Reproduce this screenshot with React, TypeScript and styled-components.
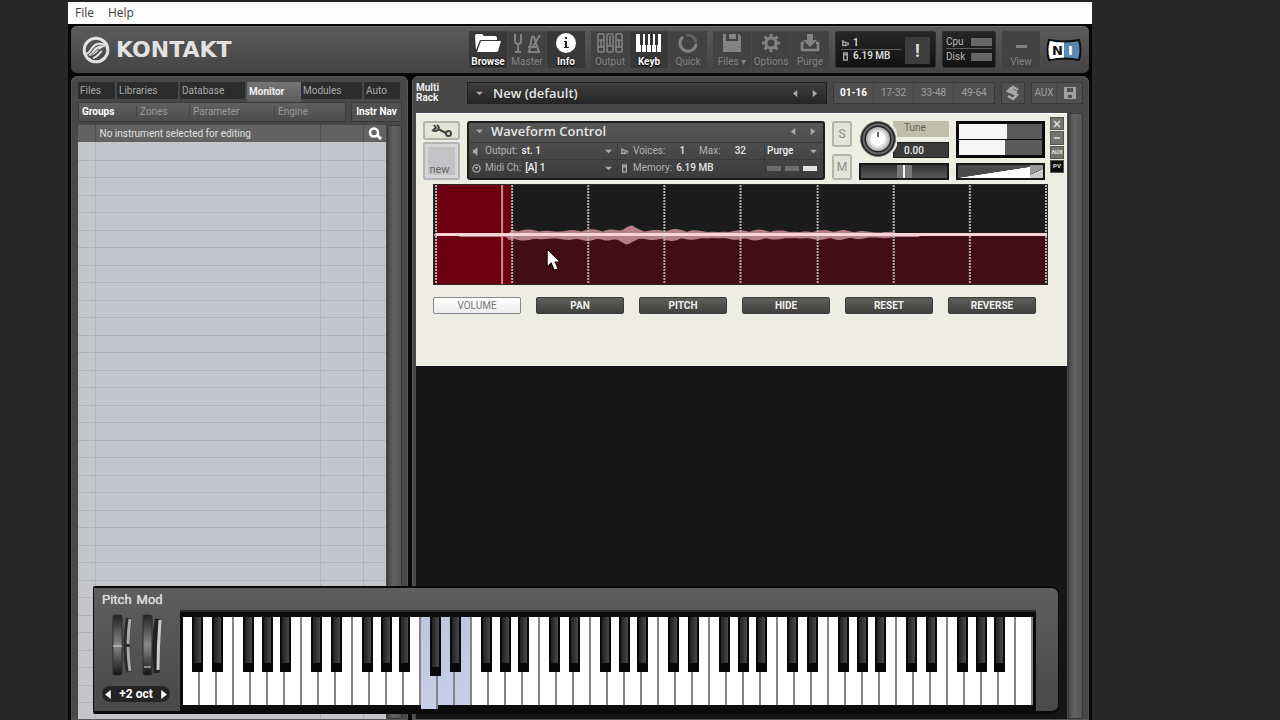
import React from "react";
import styled, { createGlobalStyle, css } from "styled-components";

const ui = `Roboto, "Liberation Sans", sans-serif`;
const human = `"Open Sans", "Noto Sans", sans-serif`;

const Global = createGlobalStyle`
  * { box-sizing: border-box; }
  body { margin: 0; background: #272727; font-family: ${ui}; font-size: 10px; line-height: 12px; color: #b8b8b8; }
  button, select, input { font: inherit; color: inherit; margin: 0; padding: 0; border: 0; background: none; border-radius: 0; }
  button { display: block; cursor: pointer; white-space: nowrap; }
  svg { display: block; }
`;

const Desktop = styled.div`
  height: 100vh;
  overflow: hidden;
  padding: 0 188px 0 68px;
  background: radial-gradient(#292929 25%, transparent 26%) 0 0 / 4px 4px, #262626;
`;
const Window = styled.main`
  position: relative;
  display: flex;
  flex-direction: column;
  height: 100%;
  background: #070707;
  border-top: 2px solid #202020;
`;
const MenuBar = styled.nav`
  display: flex;
  flex: none;
  gap: 14px;
  height: 22px;
  padding: 0 7px;
  background: #fdfdfd;
  color: #3c3c3c;
  font: 12px/20px ${human};
`;
const Frame = styled.div`
  display: flex;
  flex: 1;
  flex-direction: column;
  gap: 3px;
  min-height: 0;
  padding: 2px 3px 0;
`;
const Header = styled.header`
  display: flex;
  flex: none;
  align-items: center;
  gap: 6px;
  height: 47px;
  padding: 0 7px 0 11px;
  border-radius: 6px;
  background: linear-gradient(#5b5b5b, #444);
  box-shadow: inset 0 1px #707070;
`;
const Brand = styled.h1`
  display: flex;
  align-items: center;
  gap: 6px;
  flex: 1;
  margin: 0;
  color: #e2e2e2;
  font: bold 22px/28px "DejaVu Sans", sans-serif;
`;
const ToolGroup = styled.div`
  display: flex;
  gap: 1px;
  background: #4a4a4a;
`;
const Tool = styled.button<{ $on?: boolean }>`
  display: flex;
  flex-direction: column;
  align-items: center;
  justify-content: space-between;
  width: 38px;
  height: 37px;
  padding: 2px 0 0;
  background: ${p => (p.$on ? "#383838" : "#424242")};
  color: ${p => (p.$on ? "#fff" : "#828282")};
  font-weight: ${p => (p.$on ? 700 : 400)};
  ${p => p.$on && css`text-shadow: 0 0 2px #000, 0 1px 1px #000;`}
`;
const Dark = styled.section`
  display: flex;
  height: 37px;
  gap: 4px;
  padding: 5px;
  border-radius: 2px;
  background: linear-gradient(#262626, #121212);
  border: 1px solid #2e2e2e;
`;
const Status = styled(Dark)`width: 101px;`;
const Load = styled(Dark)`width: 54px; padding: 3px;`;
const Lines = styled.div`
  flex: 1;
  display: flex;
  flex-direction: column;
  justify-content: space-between;
`;
const Line = styled.div<{ $rule?: boolean }>`
  display: flex;
  align-items: center;
  gap: 3px;
  height: 14px;
  white-space: nowrap;
  ${p => p.$rule && css`border-bottom: 1px solid #5c5c5c;`}
`;
const Val = styled.b<{ $wide?: boolean }>`
  margin: 0 ${p => (p.$wide ? 10 : 0)}px;
  color: #e4e4e4;
  font-weight: 500;
`;
const Bar = styled.i`
  width: 21px;
  height: 8px;
  margin-left: auto;
  background: #686868;
`;
const Alert = styled.button`
  width: 25px;
  height: 27px;
  background: #3d3d3d;
  color: #ddd;
  font-size: 18px;
  font-weight: 700;
`;
const Work = styled.div`
  display: flex;
  flex: 1;
  gap: 4px;
  min-height: 0;
`;
const Browser = styled.aside`
  display: flex;
  flex: none;
  flex-direction: column;
  width: 337px;
  padding: 5px 5px 0 6px;
  border-radius: 6px 6px 0 0;
  background: #484848;
  border: 1px solid #565656;
`;
const Tabs = styled.div`
  display: grid;
  flex: none;
  grid-template-columns: 39px 63px 67px 54px 63px 1fr;
  height: 20px;
`;
const Tab = styled.button<{ $on?: boolean }>`
  height: ${p => (p.$on ? 20 : 17)}px;
  padding: 0 2px;
  border-right: ${p => (p.$on ? 0 : 2)}px solid #484848;
  background: ${p => (p.$on ? "linear-gradient(#747474, #5c5c5c)" : "#2c2c2c")};
  color: ${p => (p.$on ? "#f2f2f2" : "#a8a8a8")};
  font-weight: ${p => (p.$on ? 700 : 400)};
  text-align: left;
`;
const SubRow = styled.div`
  display: flex;
  flex: none;
  gap: 5px;
  height: 20px;
  margin-bottom: 3px;
`;
const SubTabs = styled.div`
  display: grid;
  flex: 1;
  grid-template-columns: 58px 53px 85px 1fr;
  padding: 3px 0;
  background: linear-gradient(#606060, #4c4c4c);
  border: 1px solid #3a3a3a;
`;
const Sub = styled.button<{ $on?: boolean }>`
  padding: 0 3px;
  border-right: 1px solid #444;
  color: ${p => (p.$on ? "#fff" : "#999")};
  font-weight: ${p => (p.$on ? 700 : 400)};
  text-align: left;
  &:last-child { border: 0; }
`;
const Nav = styled.button`
  width: 51px;
  border: 1px solid #3a3a3a;
  background: #505050;
  color: #fff;
  font-weight: 700;
`;
const ListArea = styled.div`
  display: flex;
  flex: 1;
  min-height: 0;
  gap: 1px;
  overflow: hidden;
`;
const List = styled.table`
  flex: 1;
  align-self: flex-start;
  table-layout: fixed;
  border-collapse: collapse;
  background: #c4c5ca;
  th {
    height: 17px;
    padding: 0 4px;
    border-right: 1px solid #505050;
    background: #626262;
    color: #e0e0e0;
    font-weight: 400;
    text-align: left;
    white-space: nowrap;
  }
  th:last-child, td:last-child { border-right: 0; }
  td {
    padding: 0;
    border: solid #b2b3b8;
    border-width: 0 1px 1px 0;
  }
  tr:nth-child(odd) td { height: 18px; }
  tr:nth-child(even) td { height: 17px; }
`;
const Scroll = styled.div`
  flex: none;
  width: 15px;
  background: linear-gradient(90deg, #484848, #626260 40%, #555);
  border: 1px solid #3a3a3a;
`;
const Rack = styled.section`
  display: flex;
  flex: 1;
  flex-direction: column;
  min-width: 0;
  padding: 0 5px 0 3px;
  border-radius: 6px 6px 0 0;
  background: #484848;
  border: 1px solid #565656;
`;
const RackBar = styled.div`
  display: flex;
  flex: none;
  align-items: center;
  gap: 6px;
  height: 36px;
  padding-bottom: 4px;
`;
const RackTitle = styled.h2`
  width: 45px;
  margin: 0;
  color: #eee;
  font: bold 10px/10px ${ui};
`;
const Field = styled.div`
  display: flex;
  flex: 1;
  align-items: center;
  gap: 10px;
  height: 22px;
  padding: 0 8px;
  border: 1px solid #222;
  background: linear-gradient(#3d3d3d, #262626);
  color: #b5b5b5;
`;
const Title = styled.select`
  flex: 1;
  appearance: none;
  color: #e4e4e4;
  font: 600 13px/18px ${human};
`;
const Arrows = styled.div`
  display: flex;
  gap: 12px;
`;
const Pages = styled.div`
  display: flex;
  height: 22px;
  border: 1px solid #3a3a3a;
  background: #505050;
`;
const Page = styled.button<{ $on?: boolean; $w?: number }>`
  display: flex;
  align-items: center;
  justify-content: center;
  width: ${p => p.$w ?? 40}px;
  border-right: 1px solid #464646;
  color: ${p => (p.$on ? "#fff" : "#a0a0a0")};
  font-weight: ${p => (p.$on ? 700 : 400)};
  &:last-child { border: 0; }
`;
const RackBody = styled.div`
  display: flex;
  flex: 1;
  gap: 1px;
  min-height: 0;
`;
const Slots = styled.div`
  flex: 1;
  min-width: 0;
  background: #161616;
`;
const Instrument = styled.article`
  padding: 7px 3px 0 7px;
  height: 253px;
  background: #edeee1;
  border-top: 1px solid #fff;
`;
const Head = styled.div`
  display: flex;
  gap: 7px;
  height: 59px;
`;
const Col = styled.div<{ $w?: number }>`
  display: flex;
  flex: none;
  flex-direction: column;
  justify-content: space-between;
  width: ${p => p.$w}px;
`;
const LightBtn = styled.button<{ $h: number }>`
  display: flex;
  align-items: center;
  justify-content: center;
  width: 100%;
  height: ${p => p.$h}px;
  border: 2px solid #b4b5aa;
  border-radius: 3px;
  background: #e3e4d8;
  color: #8c8c84;
  font-size: 12px;
`;
const Thumb = styled.button`
  display: flex;
  align-items: flex-end;
  justify-content: center;
  width: 100%;
  height: 38px;
  padding: 0 4px 2px 0;
  border: 2px solid #b5b5b5;
  border-radius: 2px;
  background: #d5d5d6;
  box-shadow: inset 0 0 0 3px #d5d5d6, inset 0 0 0 20px #c3c3c5;
  color: #666;
  font-size: 11px;
`;
const Info = styled.div`
  flex: 1;
  min-width: 0;
  padding: 1px;
  border: 2px solid #1c1c1c;
  border-radius: 3px;
  background: linear-gradient(#575757, #3b3b3b);
  color: #b0b0b0;
`;
const InfoTop = styled.div`
  display: flex;
  align-items: center;
  gap: 8px;
  height: 18px;
  padding: 0 6px 4px 6px;
`;
const InfoGrid = styled.div`
  display: grid;
  grid-template-columns: 148px 1fr 57px;
`;
const Cell = styled.div`
  display: flex;
  align-items: center;
  gap: 4px;
  height: 17px;
  padding: 0 5px 0 2px;
  border: solid #3a3a3a;
  border-width: 1px 1px 0 0;
  white-space: nowrap;
  &:nth-child(3n) { border-right: 0; }
`;
const Pick = styled.select`
  flex: 1;
  min-width: 0;
  appearance: none;
  color: #eee;
  font-weight: 500;
`;
const Leds = styled.div`
  display: flex;
  gap: 4px;
  i { width: 14px; height: 5px; background: #6c6c6c; }
  i:last-child { background: #e4e4e8; }
`;
const TuneRow = styled.div`
  display: flex;
  height: 37px;
`;
const Knob = styled.svg`
  position: relative;
  z-index: 1;
  flex: none;
`;
const TuneText = styled.div`
  display: flex;
  flex: 1;
  flex-direction: column;
  justify-content: space-between;
  min-width: 0;
  margin-left: -4px;
  label { height: 16px; padding: 0 0 0 11px; background: #c0bfac; color: #5e5e54; line-height: 14px; }
  input { width: 100%; height: 16px; padding: 0 0 0 10px; background: #3a3a3a; border: 1px solid #1e1e1e; color: #eee; font-weight: 500; }
`;
const Slider = styled.input<{ $ramp?: boolean }>`
  appearance: none;
  display: block;
  width: 100%;
  height: 17px;
  border: 2px solid #161616;
  background: ${p => (p.$ramp
    ? "linear-gradient(to bottom right, #4a4a4a 49%, #fff 51%)"
    : "linear-gradient(#333, #585858)")};
  &::-webkit-slider-thumb {
    appearance: none;
    width: ${p => (p.$ramp ? 13 : 15)}px;
    height: 13px;
    background: ${p => (p.$ramp
      ? "linear-gradient(155deg, #999 48%, #444 50%, #ccc 54%)"
      : "linear-gradient(90deg, #777 6px, #f4f4f4 6px, #f4f4f4 8px, #777 8px)")};
  }
`;
const Meter = styled.div`
  display: flex;
  flex-direction: column;
  gap: 1px;
  height: 37px;
  padding: 2px;
  border: 1px solid #050505;
  background: #0c0c0c;
`;
const Level = styled.div<{ $v: number }>`
  flex: 1;
  background: linear-gradient(90deg, #f6f6f6 ${p => p.$v}%, #5a5a5a ${p => p.$v}%);
`;
const Minis = styled.div`
  display: flex;
  flex: none;
  flex-direction: column;
  gap: 1px;
  width: 14px;
  height: 56px;
  margin: -4px 0 0 -2px;
`;
const Mini = styled.button<{ $on?: boolean }>`
  flex: 1;
  border: 1px solid #55554f;
  background: ${p => (p.$on ? "#0c0c0c" : "#74746e")};
  color: #e2e2da;
  font: bold 6px/8px ${ui};
  svg { margin: 0 auto; }
`;
const Script = styled.div`
  padding: 4px 16px 0 10px;
`;
const Wave = styled.svg`
  width: 100%;
  height: 101px;
  border: 1px solid #2a2a26;
`;
const Modes = styled.div`
  display: grid;
  grid-template-columns: repeat(6, minmax(60px, 88px));
  gap: 15px;
  margin-top: 12px;
`;
const Mode = styled.button<{ $on?: boolean }>`
  height: 17px;
  border: 1px solid ${p => (p.$on ? "#888" : "#3c3c3a")};
  border-radius: 2px;
  background: ${p => (p.$on ? "linear-gradient(#fff, #ececec)" : "linear-gradient(#5e5e5a, #40403e)")};
  color: ${p => (p.$on ? "#777" : "#f0f0f0")};
  font-weight: ${p => (p.$on ? 400 : 700)};
`;
const Piano = styled.section`
  position: absolute;
  right: 33px;
  bottom: 6px;
  left: 25px;
  display: flex;
  height: 128px;
  border: solid #0a0a0a;
  border-width: 2px 1px 3px;
  border-radius: 2px 8px 8px 2px;
  background: linear-gradient(#5e5e5e, #494949);
  padding: 0 22px 0 0;
`;
const Wheels = styled.div`
  display: flex;
  flex: none;
  flex-direction: column;
  width: 86px;
  padding: 4px 0 0 8px;
  color: #dcdcdc;
  font: 13px/16px ${ui};
`;
const WheelNames = styled.div`
  display: flex;
  gap: 5px;
  height: 22px;
  text-shadow: 0 0 1px #ddd;
`;
const Octave = styled.div`
  display: flex;
  align-items: center;
  justify-content: space-between;
  width: 68px;
  height: 16px;
  margin-top: 10px;
  padding: 0 2px;
  border-radius: 8px;
  background: #242424;
  color: #fff;
  font-size: 12px;
  font-weight: 700;
`;
const Keys = styled.div`
  display: flex;
  flex: 1;
  margin-top: 22px;
  padding: 5px 3px 6px;
  background: #0b0b0b;
  border-top: 2px solid #2a2a2a;
`;
const WhiteKey = styled.div<{ $held?: boolean; $down?: boolean }>`
  position: relative;
  flex: 1;
  margin-bottom: ${p => (p.$down ? -4 : 0)}px;
  border-right: 2px solid #858585;
  background: ${p => (p.$held ? "linear-gradient(#bcc6e2, #c9cfe6)" : "#fff")};
`;
const BlackKey = styled.button<{ $shift: number; $down?: boolean }>`
  position: absolute;
  z-index: 1;
  top: 0;
  right: ${p => -7 - p.$shift}px;
  width: 11px;
  height: ${p => (p.$down ? 59 : 55)}px;
  border: solid #080808;
  border-width: 0 2px 9px;
  background: linear-gradient(90deg, #222, #484848);
`;

const Tri = ({ dir = "down", size = 7, color = "#aaa" }: { dir?: "down" | "left" | "right"; size?: number; color?: string }) => (
  <svg width={size} height={size} viewBox="0 0 8 8" fill={color} aria-hidden>
    <path d={dir === "down" ? "M0 2h8L4 6z" : dir === "left" ? "M6 0v8L1 4z" : "M2 0v8l5-4z"} />
  </svg>
);

const icons: Record<string, React.ReactNode> = {
  Browse: <path fill="currentColor" d="M1 3q0-2 2-2h5l2 2h11q2 0 2 2v2H6L2 17zM7 8h20l-3 10q0 1-2 1H3z" />,
  Master: (
    <g fill="none" stroke="currentColor" strokeWidth="2">
      <path d="M2 1v7q0 3 3 3t3-3V1M5 11v8M2 19h6M16 19l3-15h2l5 15zM15 14h10M19 15l8-13" />
    </g>
  ),
  Info: (
    <g>
      <circle cx="14" cy="10" r="10" fill="currentColor" />
      <path d="M12 8h3v6h2v1h-5v-1h1V9h-1zM13 4h2v2h-2z" fill="#222" />
    </g>
  ),
  Output: (
    <g fill="none" stroke="currentColor" strokeWidth="1.6">
      <rect x="2" y="1" width="6" height="18" rx="1" /><path d="M2 7h6M5 7v7M2 14h6" />
      <rect x="11" y="1" width="6" height="18" rx="1" /><path d="M11 13h6M14 3v10" />
      <rect x="20" y="1" width="6" height="18" rx="1" /><path d="M20 7h6M23 7v7M20 14h6" />
    </g>
  ),
  Keyb: (
    <g>
      <path d="M1 1h25v18H1z" fill="currentColor" />
      <path d="M5 1h3v11H5zM10 1h3v11h-3zM15 1h3v11h-3zM20 1h3v11h-3z" fill="#333" />
      <path d="M6.500 12v7M11.500 12v7M16.500 12v7M21.500 12v7" stroke="#333" />
    </g>
  ),
  Quick: (
    <g fill="none" stroke="currentColor" strokeWidth="3">
      <path d="M9 4a8 8 0 1 0 13 7" /><path d="M12 2.500a8 8 0 0 1 10 8" opacity=".5" />
    </g>
  ),
  Files: <path fill="currentColor" fillRule="evenodd" d="M5 1h3v7h12V1h1l2 2v16H5zM11 1h7v5h-7z" />,
  Options: (
    <g stroke="currentColor" fill="none">
      <circle cx="14" cy="10" r="5" strokeWidth="3" />
      <path strokeWidth="3" d="M14 1v4M14 15v4M5 10h4M19 10h4M7.600 3.600l3 3M17.400 13.400l3 3M20.400 3.600l-3 3M10.600 13.400l-3 3" />
    </g>
  ),
  Purge: (
    <g>
      <path fill="currentColor" d="M11 1h6v6h4l-7 7-7-7h4z" />
      <path d="M8 10H6v7h16v-7h-2" fill="none" stroke="currentColor" strokeWidth="2.500" />
    </g>
  ),
  View: <path d="M9 12h11v3H9z" fill="currentColor" />,
};

const ToolButton = ({ name, on }: { name: string; on?: boolean }) => (
  <Tool $on={on}>
    <svg width="28" height="21" viewBox="0 0 28 21" aria-hidden>{icons[name]}</svg>
    <span>{name}{name === "Files" && " ▾"}</span>
  </Tool>
);

const NoteIcon = () => (
  <svg width="9" height="9" viewBox="0 0 10 10" fill="none" stroke="#aaa" strokeWidth="1.500" aria-hidden>
    <path d="M2 1v7M2 3l6 2M5 3v5M8 4v3M2 7h5" />
  </svg>
);
const MemIcon = () => (
  <svg width="9" height="9" viewBox="0 0 10 10" fill="none" stroke="#aaa" strokeWidth="1.500" aria-hidden>
    <path d="M3 1h4v8H3zM3 3h4" />
  </svg>
);

const envelope = (x: number) => {
  if (x < 78 || x > 460) return x > 30 && x < 490 ? 1 : 0;
  const peak = Math.max(0, 6 - Math.abs(x - 197) / 2);
  const bumps = Math.abs(Math.sin(x / 9) + Math.sin(x / 5.3)) * 1.2;
  const base = x < 250 ? 2.500 : x < 400 ? 2 : 1.500;
  return base + bumps + peak;
};
const wavePath = (() => {
  const xs = Array.from({ length: 205 }, (_, i) => i * 3);
  const top = xs.map(x => `L${x} ${(49 - envelope(x)).toFixed(1)}`).join("");
  const bottom = xs.map(x => `L${x} ${(51 + envelope(x + 4)).toFixed(1)}`).reverse().join("");
  return `M0 50${top}${bottom}Z`;
})();

const shifts: Record<number, number> = { 0: -2, 1: 1, 3: -2, 4: 0, 5: 1 };

export default function App() {
  return (
    <Desktop>
      <Global />
      <Window>
        <MenuBar>
          <button>File</button>
          <button>Help</button>
        </MenuBar>
        <Frame>
          <Header>
            <Brand>
              <svg width="28" height="28" viewBox="0 0 28 28" fill="none" stroke="#e2e2e2" aria-hidden>
                <circle cx="14" cy="14" r="11.800" strokeWidth="3" />
                <path d="M4 18c5-1 5-8 11-10 4-1 6 0 8 1" strokeWidth="2" />
                <path d="M6 19c4-1 5-7 10-9 3-1 6 0 9 0-5 1-7 3-9 5-3 3-6 6-10 4z" fill="#e2e2e2" stroke="none" />
                <path d="M11 22c4 0 6-5 9-7" strokeWidth="2" />
                <path d="M9 19c3-1 4-5 8-6" stroke="#505050" />
              </svg>
              KONTAKT
            </Brand>
            <ToolGroup><ToolButton name="Browse" on /><ToolButton name="Master" /><ToolButton name="Info" on /></ToolGroup>
            <ToolGroup><ToolButton name="Output" /><ToolButton name="Keyb" on /><ToolButton name="Quick" /></ToolGroup>
            <ToolGroup><ToolButton name="Files" /><ToolButton name="Options" /><ToolButton name="Purge" /></ToolGroup>
            <Status>
              <Lines>
                <Line $rule><NoteIcon /><Val>1</Val></Line>
                <Line><MemIcon /><Val>6.19 MB</Val></Line>
              </Lines>
              <Alert aria-label="Panic">!</Alert>
            </Status>
            <Load>
              <Lines>
                <Line $rule>Cpu<Bar /></Line>
                <Line>Disk<Bar /></Line>
              </Lines>
            </Load>
            <ToolGroup><ToolButton name="View" /></ToolGroup>
            <svg width="36" height="24" viewBox="0 0 36 24" role="img" aria-label="NI">
              <path d="M3 2q15 3 30 0 3 10 0 20-15-3-30 0Q0 12 3 2z" fill="#5a89ad" stroke="#0c0c0c" strokeWidth="2" />
              <path d="M4 3q7 1.500 14 1.500v15Q11 19.500 4 21 1 12 4 3z" fill="#fff" />
              <text x="6" y="17" fontFamily="DejaVu Sans" fontWeight="700" fontSize="13" fill="#111">N</text>
              <text x="22" y="17" fontFamily="DejaVu Sans" fontWeight="700" fontSize="13" fill="#fff">I</text>
            </svg>
          </Header>
          <Work>
            <Browser>
              <Tabs>
                {["Files", "Libraries", "Database", "Monitor", "Modules", "Auto"].map(t => <Tab key={t} $on={t === "Monitor"}>{t}</Tab>)}
              </Tabs>
              <SubRow>
                <SubTabs>
                  {["Groups", "Zones", "Parameter", "Engine"].map(t => <Sub key={t} $on={t === "Groups"}>{t}</Sub>)}
                </SubTabs>
                <Nav>Instr Nav</Nav>
              </SubRow>
              <ListArea>
                <List>
                  <colgroup><col style={{ width: 17 }} /><col /><col style={{ width: 43 }} /><col style={{ width: 23 }} /></colgroup>
                  <thead>
                    <tr>
                      <th /><th>No instrument selected for editing</th><th />
                      <th>
                        <button aria-label="Search">
                          <svg width="14" height="13" viewBox="0 0 14 13" fill="none" stroke="#fff" aria-hidden>
                            <circle cx="6" cy="5.500" r="4" strokeWidth="2.500" /><path d="M9 8l4 4" strokeWidth="3" />
                          </svg>
                        </button>
                      </th>
                    </tr>
                  </thead>
                  <tbody>
                    {Array.from({ length: 34 }, (_, i) => <tr key={i}><td /><td /><td /><td /></tr>)}
                  </tbody>
                </List>
                <Scroll />
              </ListArea>
            </Browser>
            <Rack>
              <RackBar>
                <RackTitle>Multi<br />Rack</RackTitle>
                <Field>
                  <Tri />
                  <Title aria-label="Multi"><option>New (default)</option></Title>
                  <Arrows>
                    <button aria-label="Previous multi"><Tri dir="left" /></button>
                    <button aria-label="Next multi"><Tri dir="right" /></button>
                  </Arrows>
                </Field>
                <Pages>
                  {["01-16", "17-32", "33-48", "49-64"].map(t => <Page key={t} $on={t === "01-16"}>{t}</Page>)}
                </Pages>
                <Pages>
                  <Page $w={22} aria-label="KSP">
                    <svg width="14" height="16" viewBox="0 0 14 16" fill="none" stroke="#a8a8a8" strokeWidth="2.500" aria-hidden>
                      <path d="M12 5L7 2 2 6l9 4-4 4-5-3M3 3l8 5" />
                    </svg>
                  </Page>
                </Pages>
                <Pages>
                  <Page $w={25}>AUX</Page>
                  <Page $w={25} aria-label="Save">
                    <svg width="12" height="12" viewBox="0 0 12 12" aria-hidden><path fill="#a0a0a0" fillRule="evenodd" d="M0 0h12v12H0zM3 1v4h6V1zM4 8v3h4V8z" /></svg>
                  </Page>
                </Pages>
              </RackBar>
              <RackBody>
                <Slots>
                  <Instrument>
                    <Head>
                      <Col $w={37}>
                        <LightBtn $h={19} aria-label="Edit instrument">
                          <svg width="24" height="13" viewBox="0 0 24 13" fill="none" stroke="#444" strokeWidth="2" aria-hidden>
                            <path d="M4 1l2 3-3 2M7 1q3 2 1 5-3 2-6 0M8 5l8 4" /><circle cx="18.500" cy="9.500" r="2.500" />
                          </svg>
                        </LightBtn>
                        <Thumb>new</Thumb>
                      </Col>
                      <Info>
                        <InfoTop>
                          <Tri />
                          <Title aria-label="Instrument"><option>Waveform Control</option></Title>
                          <Arrows>
                            <button aria-label="Previous instrument"><Tri dir="left" /></button>
                            <button aria-label="Next instrument"><Tri dir="right" /></button>
                          </Arrows>
                        </InfoTop>
                        <InfoGrid>
                          <Cell>
                            <svg width="9" height="9" viewBox="0 0 10 10" fill="#aaa" aria-hidden><path d="M1 3h2l3-3v10L3 7H1z" /></svg>
                            <label htmlFor="out">Output:</label><Pick id="out"><option>st. 1</option></Pick><Tri />
                          </Cell>
                          <Cell><NoteIcon />Voices: <Val $wide>1</Val>Max: <Val $wide>32</Val></Cell>
                          <Cell><Pick aria-label="Purge"><option>Purge</option></Pick><Tri /></Cell>
                          <Cell>
                            <svg width="9" height="9" viewBox="0 0 10 10" fill="none" stroke="#aaa" strokeWidth="1.500" aria-hidden><circle cx="5" cy="5" r="4" /><path d="M3 4h4M5 4v2" /></svg>
                            <label htmlFor="midi">Midi Ch:</label><Pick id="midi"><option>[A] 1</option></Pick><Tri />
                          </Cell>
                          <Cell><MemIcon />Memory: <Val>6.19 MB</Val></Cell>
                          <Cell><Leds><i /><i /><i /></Leds></Cell>
                        </InfoGrid>
                      </Info>
                      <Col $w={20}>
                        <LightBtn $h={26}>S</LightBtn>
                        <LightBtn $h={26}>M</LightBtn>
                      </Col>
                      <Col $w={90}>
                        <TuneRow>
                          <Knob width="38" height="38" viewBox="0 0 38 38" aria-hidden>
                            <defs><radialGradient id="cap"><stop offset=".5" stopColor="#fff" /><stop offset="1" stopColor="#aaa" /></radialGradient></defs>
                            <circle cx="19" cy="18" r="20" fill="#edeee1" />
                            <circle cx="19" cy="18" r="17.500" fill="#222" stroke="#777" />
                            <circle cx="19" cy="18" r="14.500" fill="none" stroke="#6a6a6a" strokeWidth="2" />
                            <circle cx="19" cy="18" r="12" fill="url(#cap)" />
                            <path d="M19 11v5" stroke="#333" strokeWidth="1.500" />
                          </Knob>
                          <TuneText>
                            <label htmlFor="tune">Tune</label>
                            <input id="tune" defaultValue="0.00" />
                          </TuneText>
                        </TuneRow>
                        <Slider type="range" aria-label="Pan" defaultValue={50} />
                      </Col>
                      <Col $w={89}>
                        <Meter><Level $v={58} /><Level $v={55} /></Meter>
                        <Slider $ramp type="range" aria-label="Volume" defaultValue={100} />
                      </Col>
                      <Minis>
                        <Mini aria-label="Close">
                          <svg width="8" height="8" viewBox="0 0 8 8" stroke="#e2e2da" strokeWidth="1.500" aria-hidden><path d="M1 1l6 6M7 1L1 7" /></svg>
                        </Mini>
                        <Mini aria-label="Minimize">
                          <svg width="8" height="8" viewBox="0 0 8 8" stroke="#e2e2da" strokeWidth="1.500" aria-hidden><path d="M1 4h6" /></svg>
                        </Mini>
                        <Mini>AUX</Mini>
                        <Mini $on>PV</Mini>
                      </Minis>
                    </Head>
                    <Script>
                      <Wave viewBox="0 0 612 99" preserveAspectRatio="none" role="img" aria-label="Waveform">
                        <path d="M0 0h612v99H0z" fill="#1b1b1b" />
                        <path d="M0 50h612v49H0z" fill="#420d14" />
                        <path d="M2 0h76v99H2z" fill="#6d0010" />
                        <path d={wavePath} fill="#b58088" />
                        <path d="M68 0v99" stroke="#d08a84" strokeWidth="2" />
                        {[2, 78, 154, 230, 306, 383, 459, 535, 611].map(x => (
                          <path key={x} d={`M${x} 0v99`} stroke="#b4afaf" strokeWidth="2" strokeDasharray="2 1" />
                        ))}
                        <path d="M2 49.500h610" stroke="#f8d4d6" strokeWidth="3" />
                        <path d="M113 64v18l4-4 3 7 4-1-3-7h5z" fill="#fff" stroke="#200408" />
                      </Wave>
                      <Modes>
                        {["VOLUME", "PAN", "PITCH", "HIDE", "RESET", "REVERSE"].map(t => <Mode key={t} $on={t === "VOLUME"}>{t}</Mode>)}
                      </Modes>
                    </Script>
                  </Instrument>
                </Slots>
                <Scroll />
              </RackBody>
            </Rack>
          </Work>
        </Frame>
        <Piano>
          <Wheels>
            <WheelNames><span>Pitch</span><span>Mod</span></WheelNames>
            <svg width="68" height="62" viewBox="0 0 68 62" aria-hidden>
              <defs>
                <linearGradient id="wheel" x2="0" y2="1"><stop stopColor="#222" /><stop offset=".5" stopColor="#888" /><stop offset="1" stopColor="#151515" /></linearGradient>
              </defs>
              <rect x="11" y="1" width="9" height="60" rx="2" fill="url(#wheel)" stroke="#2c2c2c" />
              <path d="M11 32h9" stroke="#aaa" strokeWidth="2" />
              <path d="M27 4q-5 27 0 54" fill="none" stroke="#2a2a2a" strokeWidth="6" />
              <path d="M28 5q-4 27 0 52" fill="none" stroke="#aaa" strokeWidth="3" strokeDasharray="25 3" />
              <rect x="41" y="1" width="9" height="60" rx="2" fill="url(#wheel)" stroke="#2c2c2c" />
              <path d="M42 53h7" stroke="#888" strokeWidth="2" />
              <path d="M56 5q-5 26-1 54" fill="none" stroke="#222" strokeWidth="6" />
              <path d="M58 6q-2 26-2 50" fill="none" stroke="#ccc" strokeWidth="3" />
            </svg>
            <Octave>
              <button aria-label="Octave down"><Tri dir="left" size={9} color="#fff" /></button>
              +2 oct
              <button aria-label="Octave up"><Tri dir="right" size={9} color="#fff" /></button>
            </Octave>
          </Wheels>
          <Keys>
            {Array.from({ length: 50 }, (_, i) => (
              <WhiteKey key={i} $held={i >= 14 && i <= 16} $down={i === 14}>
                {i < 49 && i % 7 in shifts && <BlackKey $shift={shifts[i % 7]} $down={i === 14} aria-label={`Black key ${i}`} />}
              </WhiteKey>
            ))}
          </Keys>
        </Piano>
      </Window>
    </Desktop>
  );
}
